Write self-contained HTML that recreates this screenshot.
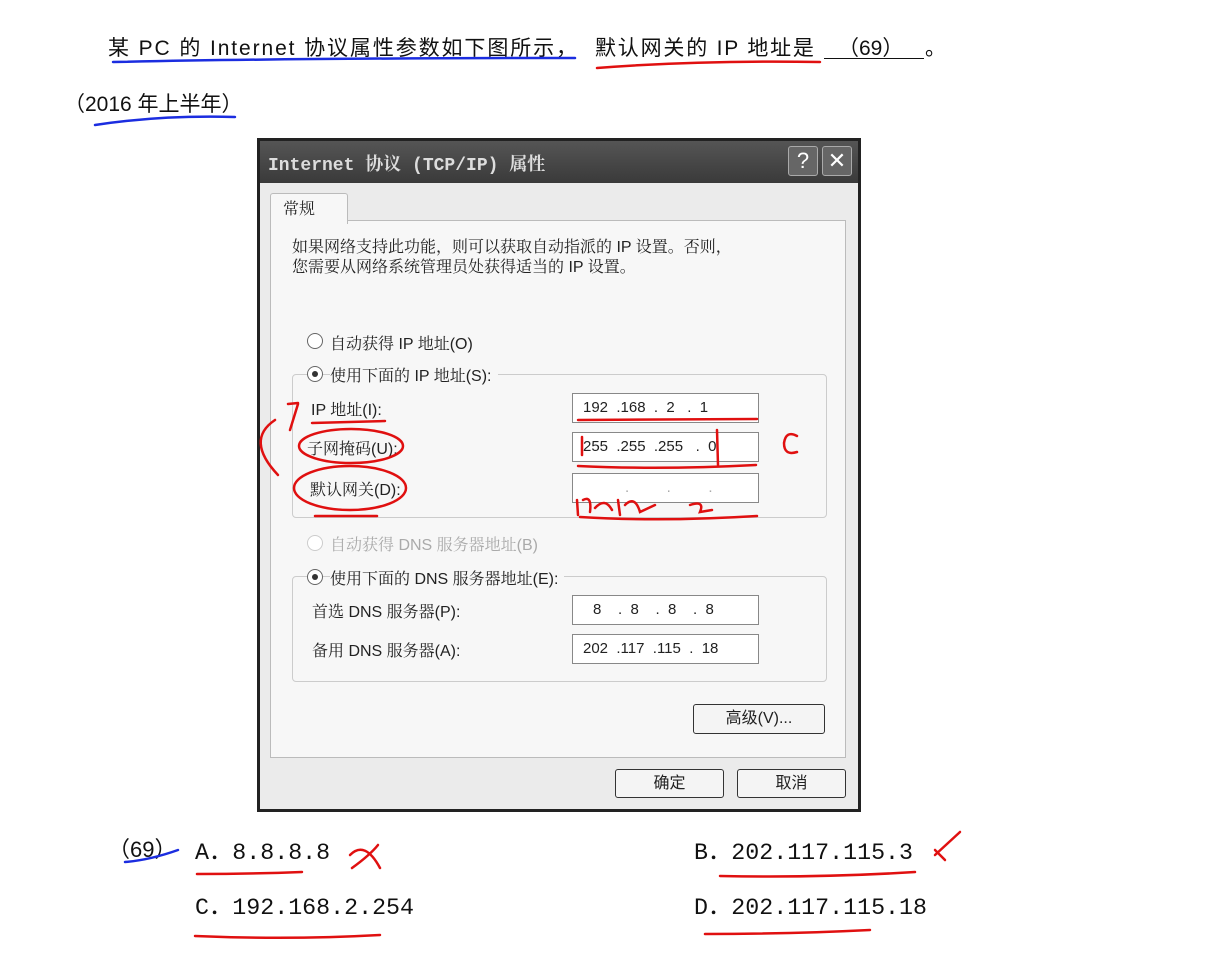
<!DOCTYPE html>
<html><head><meta charset="utf-8"><style>
body{margin:0;width:1222px;height:967px;background:#fff;position:relative;overflow:hidden;font-family:"Liberation Sans","Noto Sans CJK SC",sans-serif;}
.a{position:absolute;white-space:nowrap;}
.t{font-size:21px;color:#111;}
.m{font-family:"Liberation Mono","Noto Sans CJK SC",monospace;font-size:23.3px;color:#111;}
.d{font-family:"Liberation Sans","Noto Serif CJK SC","Noto Sans CJK SC",sans-serif;font-size:16px;color:#222;}
.box{position:absolute;background:#fff;border:1px solid #888;height:28px;font-size:15px;color:#222;}
.gb{position:absolute;border:1px solid #ccc;border-radius:4px;}
.rad{position:absolute;width:14px;height:14px;border:1px solid #666;border-radius:50%;background:#fff;}
.rad.on::after{content:"";position:absolute;left:4px;top:4px;width:6px;height:6px;border-radius:50%;background:#333;}
.btn{position:absolute;border:1px solid #333;border-radius:3px;background:#f4f4f4;font-size:16px;text-align:center;color:#222;}
</style></head><body>
<div class="a t" style="left:108px;top:32px;letter-spacing:1.9px">某 PC 的 Internet 协议属性参数如下图所示，</div>
<div class="a t" style="left:595px;top:32px;letter-spacing:1.8px">默认网关的 IP 地址是</div>
<div class="a t" style="left:838px;top:32px">（69）</div>
<div class="a t" style="left:925px;top:32px">。</div>
<div class="a t" style="left:64px;top:88px">（2016 年上半年）</div>
<!-- dialog -->
<div class="a" style="left:257px;top:138px;width:604px;height:674px;background:#222;"></div>
<div class="a" style="left:260px;top:141px;width:598px;height:42px;background:linear-gradient(#555,#3a3a3a);"></div>
<div class="a" style="left:268px;top:150px;font-family:'Liberation Mono','Noto Serif CJK SC',monospace;font-size:18px;font-weight:bold;color:#ddd;">Internet 协议 (TCP/IP) 属性</div>
<div class="a" style="left:788px;top:146px;width:28px;height:28px;border:1px solid #aaa;border-radius:3px;background:#666;color:#fff;font-size:22px;text-align:center;line-height:28px">?</div>
<div class="a" style="left:822px;top:146px;width:28px;height:28px;border:1px solid #aaa;border-radius:3px;background:#666;color:#fff;font-size:22px;text-align:center;line-height:28px">✕</div>
<div class="a" style="left:260px;top:183px;width:598px;height:626px;background:#ebebeb;"></div>
<div class="a" style="left:270px;top:220px;width:574px;height:536px;background:#f7f7f7;border:1px solid #bbb;"></div>
<div class="a" style="left:270px;top:193px;width:76px;height:30px;background:#f7f7f7;border:1px solid #bbb;border-bottom:none;border-radius:3px 3px 0 0"></div>
<div class="a d" style="left:283px;top:196px">常规</div>
<div class="a d" style="left:292px;top:238px;line-height:20px">如果网络支持此功能，则可以获取自动指派的 IP 设置。否则，<br>您需要从网络系统管理员处获得适当的 IP 设置。</div>
<div class="rad" style="left:307px;top:333px"></div><div class="a d" style="left:330px;top:331px">自动获得 IP 地址(O)</div>
<div class="gb" style="left:292px;top:374px;width:533px;height:142px"></div>
<div class="rad on" style="left:307px;top:366px"></div><div class="a d" style="left:330px;top:363px;background:#f7f7f7;padding-right:6px">使用下面的 IP 地址(S):</div>
<div class="a d" style="left:311px;top:397px">IP 地址(I):</div>
<div class="a d" style="left:307px;top:436px">子网掩码(U):</div>
<div class="a d" style="left:310px;top:477px">默认网关(D):</div>
<div class="box" style="left:572px;top:393px;width:185px"><span class="a" style="left:10px;top:5px">192 &nbsp;.168 &nbsp;. &nbsp;2 &nbsp; . &nbsp;1</span></div>
<div class="box" style="left:572px;top:432px;width:185px"><span class="a" style="left:10px;top:5px">255 &nbsp;.255 &nbsp;.255 &nbsp; . &nbsp;0</span></div>
<div class="box" style="left:572px;top:473px;width:185px"><span class="a" style="left:52px;top:5px;color:#aaa">. &nbsp; &nbsp; &nbsp; &nbsp; . &nbsp; &nbsp; &nbsp; &nbsp; .</span></div>
<div class="rad" style="left:307px;top:535px;border-color:#ccc"></div><div class="a d" style="left:330px;top:532px;color:#aaa">自动获得 DNS 服务器地址(B)</div>
<div class="gb" style="left:292px;top:576px;width:533px;height:104px"></div>
<div class="rad on" style="left:307px;top:569px"></div><div class="a d" style="left:330px;top:566px;background:#f7f7f7;padding-right:6px">使用下面的 DNS 服务器地址(E):</div>
<div class="a d" style="left:312px;top:599px">首选 DNS 服务器(P):</div>
<div class="a d" style="left:312px;top:638px">备用 DNS 服务器(A):</div>
<div class="box" style="left:572px;top:595px;width:185px"><span class="a" style="left:20px;top:5px">8 &nbsp; &nbsp;. &nbsp;8 &nbsp; &nbsp;. &nbsp;8 &nbsp; &nbsp;. &nbsp;8</span></div>
<div class="box" style="left:572px;top:634px;width:185px"><span class="a" style="left:10px;top:5px">202 &nbsp;.117 &nbsp;.115 &nbsp;. &nbsp;18</span></div>
<div class="btn" style="left:693px;top:704px;width:130px;height:28px;line-height:28px">高级(V)...</div>
<div class="btn" style="left:615px;top:769px;width:107px;height:27px;line-height:27px">确定</div>
<div class="btn" style="left:737px;top:769px;width:107px;height:27px;line-height:27px">取消</div>
<!-- answers -->
<div class="a t" style="left:108px;top:832px;font-size:22px">（69）</div>
<div class="a m" style="left:195px;top:832px">A．8.8.8.8</div>
<div class="a m" style="left:694px;top:832px">B．202.117.115.3</div>
<div class="a m" style="left:195px;top:887px">C．192.168.2.254</div>
<div class="a m" style="left:694px;top:887px">D．202.117.115.18</div>
<div class="a" style="left:824px;top:58px;width:100px;border-top:1.5px solid #111"></div>
<svg class="a" style="left:0;top:0" width="1222" height="967" fill="none" stroke-linecap="round">
<g stroke="#1b2de0" stroke-width="2.5">
<path d="M113 62 Q300 58 575 58"/><path d="M95 125 Q160 115 235 117"/><path d="M125 862 Q150 860 178 850"/>
</g>
<g stroke="#e01010" stroke-width="2.5">
<path d="M597 68 Q700 60 820 62"/><path d="M312 423 L385 421"/><path d="M578 420 L757 419"/>
<ellipse cx="351" cy="446" rx="52" ry="17"/><ellipse cx="350" cy="488" rx="56" ry="22"/>
<path d="M315 516 L377 516"/><path d="M578 466 Q660 470 756 465"/><path d="M580 517 Q660 522 757 516"/>
<path d="M582 437 L582 455"/><path d="M717 430 L718 465"/>
<path d="M298 404 L290 430 M288 404 L298 403"/><path d="M275 420 Q245 440 278 475"/>
<path d="M797 436 Q786 430 784 443 Q784 456 797 452"/>
<path d="M577 500 L578 515 M583 500 Q592 495 590 512 M595 508 Q605 497 612 510 M618 500 L620 515 M625 505 Q635 495 640 512 L655 505 M690 505 Q705 500 700 512 L712 510"/>
<path d="M350 855 Q365 840 380 868 M352 868 Q370 855 378 845"/><path d="M935 855 L960 832 M935 850 L945 860"/>
<path d="M197 874 Q250 874 302 872"/><path d="M720 876 Q820 878 915 872"/>
<path d="M195 936 Q290 940 380 935"/><path d="M705 934 Q790 934 870 930"/>
</g></svg>
</body></html>
